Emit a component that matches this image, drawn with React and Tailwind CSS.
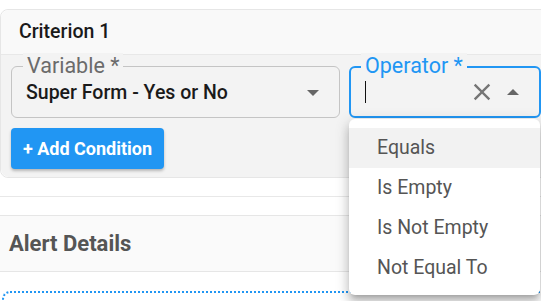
export default function App() {
  const options = ["Equals", "Is Empty", "Is Not Empty", "Not Equal To"];

  return (
    <div className="w-[541px] h-[301px] overflow-hidden bg-white font-['Roboto',sans-serif]">
      <div className="w-[560px] pt-[9px]">
        {/* Criterion card */}
        <div className="rounded-lg border border-[#e6e6e6]">
          <div className="h-[45px] flex items-center px-[18px] bg-[#f9f9f9] border-b border-[#e8e8e8] rounded-t-lg text-[19.5px] font-medium text-[#1a1a1a]">
            Criterion 1
          </div>
          <div className="bg-[#f3f3f3] px-[10px] pt-[11px] pb-[8px] rounded-b-lg">
            <div className="flex gap-[9px]">
              {/* Variable select */}
              <div className="relative w-[329px] h-[52px] rounded-md border border-[#c4c4c4] flex items-center pl-[14px] pr-[20px]">
                <span className="absolute left-[11px] -top-[14px] px-[4px] bg-[#f3f3f3] text-[21.5px] leading-[26px] text-[#6b6b6b]">
                  Variable *
                </span>
                <span className="flex-1 pt-[2px] text-[19.5px] font-medium text-[#1a1a1a]">
                  Super Form - Yes or No
                </span>
                <svg width="12" height="6" viewBox="0 0 12 6" className="mt-[2px]">
                  <path d="M0 0h12L6 6z" fill="#666" />
                </svg>
              </div>

              {/* Operator select (focused) */}
              <div className="relative w-[192px] h-[52px] rounded-md border-2 border-[#2196f3] flex items-center pl-[14px] pr-[20px]">
                <span className="absolute left-[10px] -top-[15px] px-[4px] bg-[#f3f3f3] text-[21.5px] leading-[26px] text-[#2196f3]">
                  Operator *
                </span>
                <span className="flex-1 flex items-center">
                  <span className="w-px h-[22px] bg-[#111]" />
                </span>
                <svg width="28" height="28" viewBox="0 0 24 24" className="mr-[11px]">
                  <path
                    d="M19 6.41 17.59 5 12 10.59 6.41 5 5 6.41 10.59 12 5 17.59 6.41 19 12 13.41 17.59 19 19 17.59 13.41 12z"
                    fill="#757575"
                  />
                </svg>
                <svg width="12" height="6" viewBox="0 0 12 6">
                  <path d="M6 0l6 6H0z" fill="#666" />
                </svg>

                {/* Options menu */}
                <div className="absolute left-[-2px] top-full mt-[3px] w-[191px] pt-[9px] pb-[7px] bg-white rounded-md shadow-[0_5px_5px_-3px_rgba(0,0,0,0.2),0_8px_10px_1px_rgba(0,0,0,0.14),0_3px_14px_2px_rgba(0,0,0,0.12)] z-10">
                  {options.map((opt, i) => (
                    <div
                      key={opt}
                      className={`h-[40px] flex items-center pl-[28px] text-[19.5px] text-[#555] ${
                        i === 0 ? "bg-[#f2f2f2]" : ""
                      }`}
                    >
                      {opt}
                    </div>
                  ))}
                </div>
              </div>
            </div>

            <button className="mt-[10px] h-[41px] w-[153px] rounded bg-[#2196f3] text-white text-[18px] font-bold shadow-[0_2px_3px_rgba(0,0,0,0.25)]">
              + Add Condition
            </button>
          </div>
        </div>

        {/* Alert details */}
        <div className="mt-[18px] h-[19px] border-t border-[#e8e8e8]" />
        <div className="h-[57px] flex items-center px-[9px] bg-[#fafafa] border-y border-[#e6e6e6] text-[22px] font-bold text-[#555]">
          Alert Details
        </div>
        <div className="mt-[19px] ml-[2px] h-[40px] rounded-lg border-2 border-dotted border-[#2196f3]" />
      </div>
    </div>
  );
}
